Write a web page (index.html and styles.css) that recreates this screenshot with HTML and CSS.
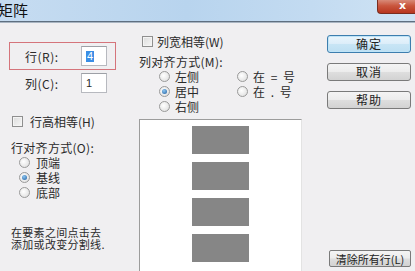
FILE: index.html
```html
<!DOCTYPE html>
<html lang="zh">
<head>
<meta charset="utf-8">
<title>矩阵</title>
<link rel="stylesheet" href="styles.css">
</head>
<body>
<div class="window">
  <div class="titlebar">
    <span class="title">矩阵</span>
    <span class="close">x</span>
  </div>
  <div class="body">
    <div class="col-left">
      <div class="field field-hl">
        <span class="flabel">行(R):</span>
        <span class="input"><span class="sel">4</span></span>
      </div>
      <div class="field field-plain">
        <span class="flabel">列(C):</span>
        <span class="input">1</span>
      </div>
      <div class="check check-rows"><span class="box"></span><span>行高相等(H)</span></div>
      <div class="group-label">行对齐方式(O):</div>
      <div class="radios">
        <div class="radio-row"><span class="radio"></span><span>顶端</span></div>
        <div class="radio-row"><span class="radio on"></span><span>基线</span></div>
        <div class="radio-row"><span class="radio"></span><span>底部</span></div>
      </div>
      <p class="hint">在要素之间点击去<br>添加或改变分割线.</p>
    </div>
    <div class="col-mid">
      <div class="check check-cols"><span class="box"></span><span>列宽相等(W)</span></div>
      <div class="group-label group-label-mid">列对齐方式(M):</div>
      <div class="radio-grid">
        <div class="radio-row"><span class="radio"></span><span>左侧</span></div>
        <div class="radio-row"><span class="radio"></span><span class="spaced">在 = 号</span></div>
        <div class="radio-row"><span class="radio on"></span><span>居中</span></div>
        <div class="radio-row"><span class="radio"></span><span class="spaced">在 . 号</span></div>
        <div class="radio-row"><span class="radio"></span><span>右侧</span></div>
      </div>
      <div class="preview">
        <div class="cell"></div>
        <div class="cell"></div>
        <div class="cell"></div>
        <div class="cell"></div>
      </div>
    </div>
    <div class="col-right">
      <button class="btn btn-default">确定</button>
      <button class="btn">取消</button>
      <button class="btn">帮助</button>
      <button class="btn btn-clear">清除所有行(L)</button>
    </div>
  </div>
</div>
</body>
</html>
```
FILE: styles.css
```css
* { box-sizing: border-box; }
html, body {
  margin: 0;
  padding: 0;
  width: 415px;
  height: 271px;
  overflow: hidden;
  background: #f0eff1;
}
body {
  font-family: "Noto Sans CJK SC", "Noto Sans", sans-serif;
  font-size: 12px;
  line-height: 15px;
  color: #2a2a2a;
}
.window {
  width: 415px;
  height: 271px;
  display: flex;
  flex-direction: column;
  overflow: hidden;
}
.titlebar {
  height: 22px;
  flex: none;
  display: flex;
  justify-content: space-between;
  align-items: flex-start;
  background: linear-gradient(to right, #c6dcf1, #b8d4ee 45%, #c3dbf1 75%, #cfe3f4);
  border-bottom: 1px solid #5f6f80;
  box-shadow: 0 1px 0 #a9b5c2;
  overflow: hidden;
}
.title {
  margin-left: -2px;
  margin-top: 1px;
  font-size: 15px;
  line-height: 18px;
  color: #111;
}
.close {
  width: 38px;
  height: 14px;
  background: linear-gradient(#d88a78, #c9553d 45%, #b8361f);
  border: 1px solid #7a2d1f;
  border-top: none;
  border-right: none;
  border-radius: 0 0 0 4px;
  color: #fff;
  font-weight: bold;
  font-family: "DejaVu Sans", sans-serif;
  font-size: 11px;
  line-height: 11px;
  padding-left: 21px;
}
.body {
  flex: 1;
  display: flex;
  padding-left: 9px;
  min-height: 0;
}
.col-left {
  width: 130px;
  flex: none;
  display: flex;
  flex-direction: column;
}
.field {
  display: flex;
  align-items: center;
}
.field-hl {
  margin-top: 20px;
  width: 107px;
  height: 28px;
  border: 1px solid #d5747b;
  padding-left: 15px;
}
.field-plain {
  margin-top: 3px;
  height: 20px;
  padding-left: 16px;
}
.flabel {
  width: 56px;
  letter-spacing: 0.5px;
}
.input {
  width: 26px;
  height: 20px;
  background: #fff;
  border: 1px solid #b7b9bf;
  border-top-color: #9da0a6;
  font-family: "Liberation Sans", sans-serif;
  font-size: 11px;
  line-height: 18px;
  padding-left: 4px;
}
.sel {
  display: inline-block;
  background: #3a8ee6;
  color: #fff;
  padding: 0 1px;
  line-height: 11px;
}
.check {
  display: flex;
  align-items: center;
  gap: 7px;
  height: 15px;
}
.check-rows {
  margin-top: 21px;
  padding-left: 3px;
  gap: 7px;
}
.box {
  width: 11px;
  height: 11px;
  border: 1px solid #8f8f8f;
  background: linear-gradient(135deg, #dcdcdc, #f7f7f7);
  box-shadow: inset 0 0 0 1px #f4f4f4;
}
.group-label {
  margin-top: 11px;
  padding-left: 2px;
  letter-spacing: 0.3px;
}
.radios {
  padding-left: 10px;
  display: flex;
  flex-direction: column;
}
.radio-row {
  display: flex;
  align-items: center;
  gap: 6px;
  height: 15px;
}
.radio {
  width: 11px;
  height: 11px;
  border-radius: 50%;
  border: 1px solid #9a9a9a;
  background: radial-gradient(circle at 40% 40%, #ffffff, #dadada);
  position: relative;
  flex: none;
}
.radio.on::after {
  content: "";
  position: absolute;
  left: 2px;
  top: 2px;
  width: 5px;
  height: 5px;
  border-radius: 50%;
  background: radial-gradient(circle at 40% 35%, #8cc6f2, #1f5d9e);
}
.hint {
  margin: 26px 0 0 2px;
  font-size: 11px;
  line-height: 12px;
  letter-spacing: 0.3px;
}
.col-mid {
  width: 163px;
  flex: none;
  display: flex;
  flex-direction: column;
}
.check-cols {
  margin-top: 12px;
  padding-left: 3px;
  gap: 4px;
}
.group-label-mid {
  margin-top: 5px;
  padding-left: 0;
}
.radio-grid {
  display: grid;
  grid-template-columns: 78px auto;
  padding-left: 20px;
}
.radio-grid .radio-row { gap: 5px; }
.spaced { word-spacing: 3px; }
.preview {
  margin-top: 5px;
  flex: 1;
  background: #fff;
  border-top: 1px solid #9c9c9c;
  border-left: 1px solid #9c9c9c;
  border-right: 1px solid #e3e3e3;
  display: flex;
  flex-direction: column;
  align-items: center;
  gap: 8px;
  padding-top: 6px;
}
.cell {
  width: 57px;
  height: 28px;
  background: #868686;
}
.col-right {
  margin-left: 25px;
  width: 85px;
  display: flex;
  flex-direction: column;
  gap: 10px;
  padding-top: 13px;
  padding-bottom: 4px;
}
.btn {
  width: 84px;
  height: 18px;
  padding: 0;
  font-family: "Noto Sans CJK SC", sans-serif;
  font-size: 12px;
  line-height: 16px;
  color: #222;
  border: 1px solid #7a7a7a;
  border-radius: 3px;
  background: linear-gradient(#f4f4f4, #ececec 48%, #dedede 52%, #d2d2d2);
  letter-spacing: 1px;
}
.btn-default {
  border-color: #3d7eae;
  background: linear-gradient(#eaf6fc, #dcedf9 48%, #c8e5f5 52%, #bddff2);
  box-shadow: inset 0 0 0 1px #bfe4f7;
}
.btn-clear {
  margin-top: auto;
  width: 82px;
  margin-left: 2px;
  height: 17px;
  font-size: 11px;
  letter-spacing: 0;
  border-radius: 2px;
}
```
